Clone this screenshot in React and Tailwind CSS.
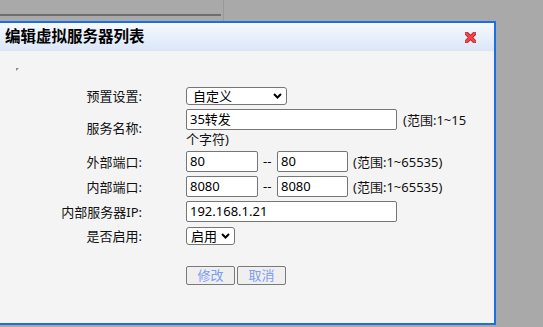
const FONT = "font-['Noto_Sans','Noto_Sans_CJK_SC',sans-serif]";

function Chevron() {
  return (
    <svg width="9" height="6" viewBox="0 0 9 6" className="shrink-0">
      <polyline points="1,1 4.5,4.5 8,1" fill="none" stroke="#000" strokeWidth="2" />
    </svg>
  );
}

function CloseX() {
  return (
    <svg width="11" height="11" viewBox="0 0 11 11">
      <line x1="1.5" y1="1.5" x2="9.5" y2="9.5" stroke="#b8252b" strokeWidth="4" strokeLinecap="square" />
      <line x1="9.5" y1="1.5" x2="1.5" y2="9.5" stroke="#b8252b" strokeWidth="4" strokeLinecap="square" />
      <line x1="1.5" y1="1.5" x2="9.5" y2="9.5" stroke="#f0464b" strokeWidth="2.4" strokeLinecap="square" />
      <line x1="9.5" y1="1.5" x2="1.5" y2="9.5" stroke="#f0464b" strokeWidth="2.4" strokeLinecap="square" />
    </svg>
  );
}

function Row({ label, children, className = "" }) {
  return (
    <div className={"flex items-center " + className}>
      <div className="w-[142px] shrink-0 text-right leading-[16px] text-[#111]">{label}</div>
      <div className="ml-[44px]">{children}</div>
    </div>
  );
}

function Field({ w, children }) {
  return (
    <div className={"h-[21px] bg-white border border-[#767676] rounded-[2px] pl-[3px] flex items-center leading-none " + w}>
      {children}
    </div>
  );
}

export default function App() {
  return (
    <div className={"w-[543px] h-[327px] bg-[#a9a9a9] overflow-hidden flex flex-col text-[13px] text-black " + FONT}>
      <div className="h-[21px] shrink-0 flex">
        <div className="w-[221px] pt-[14px]">
          <div className="h-[2px] bg-[#6e6e6e]" />
        </div>
        <div className="ml-[2px] w-px h-full bg-[#999]" />
      </div>
      <div className="w-[496px] h-[304px] shrink-0 border-t-2 border-r-2 border-b-2 border-[#1a6fe3] bg-[#f4f4f4] flex flex-col">
        <div className="h-[28px] shrink-0 bg-linear-to-b from-[#f6f9fe] to-[#dae6f8] flex items-center justify-between pl-[5px] pr-[18px]">
          <span className="font-bold text-[15.5px] leading-none text-black">编辑虚拟服务器列表</span>
          <CloseX />
        </div>
        <div className="pl-[16px] pt-[17px]">
          <svg width="3" height="3" viewBox="0 0 3 3" className="block">
            <polygon points="0,0 3,0 0,3" fill="#8a8a8a" />
          </svg>
        </div>
        <div className="mt-[16px] flex flex-col">
          <Row label="预置设置:">
            <div className="w-[101px] h-[18px] bg-white border border-[#767676] rounded-[3px] pl-[6px] pr-[4px] flex items-center justify-between leading-none">
              <span>自定义</span>
              <Chevron />
            </div>
          </Row>
          <Row label="服务名称:" className="mt-[4px]">
            <div className="flex flex-col">
              <div className="flex items-center">
                <Field w="w-[211px]">35转发</Field>
                <span className="ml-[6px] leading-[16px] text-[#111]">(范围:1~15</span>
              </div>
              <div className="mt-[1px] leading-[16px] text-[#111]">个字符)</div>
            </div>
          </Row>
          <Row label="外部端口:" className="mt-[4px]">
            <div className="flex items-center">
              <Field w="w-[72px]">80</Field>
              <span className="mx-[5px] w-[9px] leading-none">--</span>
              <Field w="w-[71px]">80</Field>
              <span className="ml-[5px] leading-[16px] text-[#111]">(范围:1~65535)</span>
            </div>
          </Row>
          <Row label="内部端口:" className="mt-[4px]">
            <div className="flex items-center">
              <Field w="w-[72px]">8080</Field>
              <span className="mx-[5px] w-[9px] leading-none">--</span>
              <Field w="w-[71px]">8080</Field>
              <span className="ml-[5px] leading-[16px] text-[#111]">(范围:1~65535)</span>
            </div>
          </Row>
          <Row label="内部服务器IP:" className="mt-[4px]">
            <Field w="w-[211px]">192.168.1.21</Field>
          </Row>
          <Row label="是否启用:" className="mt-[5px]">
            <div className="w-[49px] h-[18px] bg-white border border-[#767676] rounded-[3px] pl-[4px] pr-[4px] flex items-center justify-between leading-none">
              <span>启用</span>
              <Chevron />
            </div>
          </Row>
          <div className="mt-[21px] ml-[186px] flex gap-[2px]">
            <div className="w-[49px] h-[19px] bg-[#efefef] border border-[#7a7a7a] rounded-[2px] flex items-center justify-center text-[#7d9cf4] leading-none">修改</div>
            <div className="w-[49px] h-[19px] bg-[#efefef] border border-[#7a7a7a] rounded-[2px] flex items-center justify-center text-[#7d9cf4] leading-none">取消</div>
          </div>
        </div>
      </div>
    </div>
  );
}
